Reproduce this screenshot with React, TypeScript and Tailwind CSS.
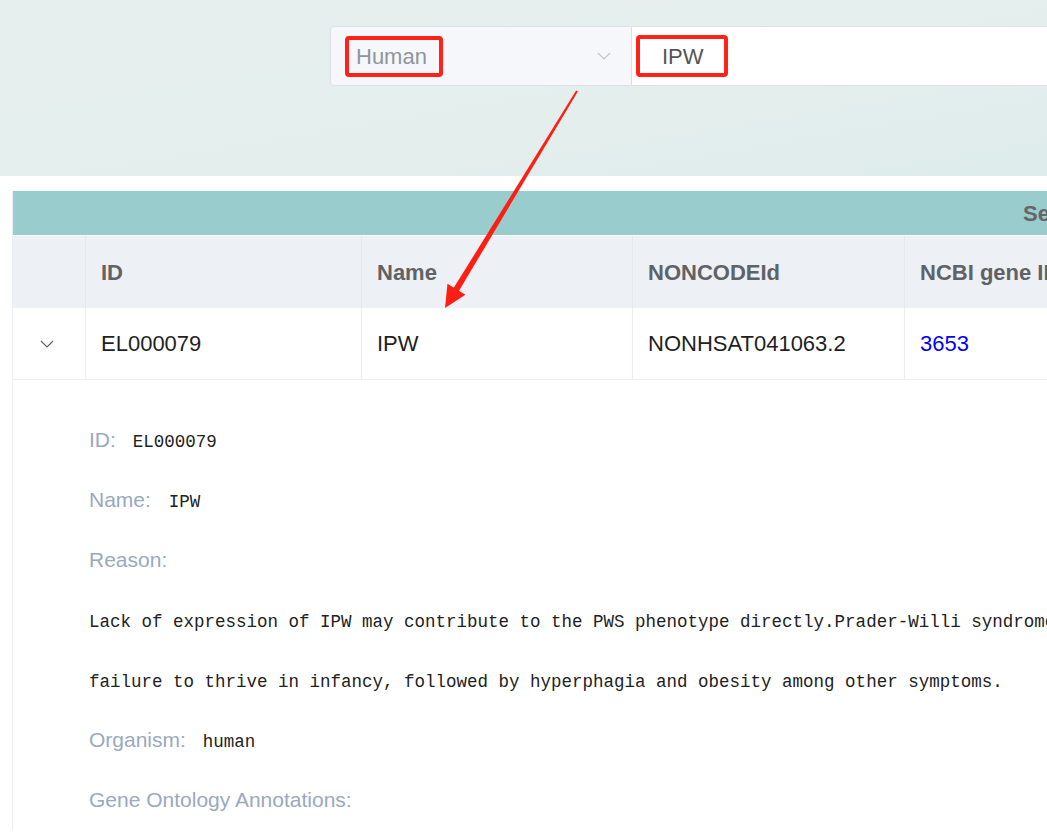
import React from "react";

function Chevron({ className, color }: { className?: string; color: string }) {
  return (
    <svg className={className} width="14" height="8" viewBox="0 0 14 8" fill="none">
      <path d="M1 1 L7 7 L13 1" stroke={color} strokeWidth="1.2" />
    </svg>
  );
}

function Arrow() {
  const sx = 577, sy = 91, tx = 445, ty = 308;
  const dx = tx - sx, dy = ty - sy;
  const len = Math.sqrt(dx * dx + dy * dy);
  const ux = dx / len, uy = dy / len;
  const px = -uy, py = ux;
  const headL = 22, headW = 10.5;
  const bx = tx - ux * headL, by = ty - uy * headL;
  const w0 = 1, w1 = 3;
  const shaft = [
    [sx + px * w0, sy + py * w0],
    [bx + px * w1 + ux * 2, by + py * w1 + uy * 2],
    [bx - px * w1 + ux * 2, by - py * w1 + uy * 2],
    [sx - px * w0, sy - py * w0],
  ];
  const head = [
    [tx, ty],
    [bx + px * headW, by + py * headW],
    [bx - px * headW, by - py * headW],
  ];
  const pts = (a: number[][]) => a.map((p) => p.join(",")).join(" ");
  return (
    <svg className="absolute left-0 top-0 pointer-events-none" width="1047" height="837">
      <polygon points={pts(shaft)} fill="#ff1e12" />
      <polygon points={pts(head)} fill="#ff1e12" />
    </svg>
  );
}

export default function App() {
  const label = "text-[#99a9bf] text-[21px] font-['Liberation_Sans',sans-serif]";
  const mono = "font-['Liberation_Mono',monospace] text-[17.5px] text-[#222] pt-[4px]";
  return (
    <div className="relative w-[1047px] h-[837px] overflow-hidden bg-white font-['Liberation_Sans',Arial,sans-serif]">
      {/* top band */}
      <div className="h-[176px] bg-gradient-to-br from-[#e6efed] via-[#e5efed] to-[#deeceb] pt-[26px] pl-[330px]">
        <div className="flex h-[60px] w-[900px]">
          <div className="relative w-[302px] h-full bg-[#f5f7fa] border border-[#dcdfe6] rounded-l-[4px] flex items-center pl-[25px] pr-[20px]">
            <span className="text-[22px] text-[#90949b]">Human</span>
            <Chevron className="ml-auto" color="#c0c4cc" />
            <div className="absolute left-[14px] top-[9px] w-[98px] h-[41px] border-[4px] border-[#ff2218] rounded-[4px]" />
          </div>
          <div className="relative flex-1 h-full bg-white border-y border-[#dcdfe6] flex items-center pl-[30px]">
            <span className="text-[22px] text-[#555]">IPW</span>
            <div className="absolute left-[4px] top-[8px] w-[92px] h-[42px] border-[4px] border-[#ff2218] rounded-[4px]" />
          </div>
        </div>
      </div>

      {/* table */}
      <div className="mt-[15px] ml-[12px] border-l border-[#ebeef5] w-[1400px]">
        <div className="h-[45px] bg-[#99cccc] flex items-center pl-[1010px] border-b border-white">
          <span className="text-[22px] font-bold text-[#666] whitespace-nowrap">Search Results</span>
        </div>
        <div className="flex h-[72px] bg-[#edf0f5] text-[22px] font-bold text-[#606266]">
          <div className="w-[73px] border-r border-[#e4e7ed]" />
          <div className="w-[276px] border-r border-[#e4e7ed] flex items-center pl-[15px]">ID</div>
          <div className="w-[271px] border-r border-[#e4e7ed] flex items-center pl-[15px]">Name</div>
          <div className="w-[272px] border-r border-[#e4e7ed] flex items-center pl-[15px]">NONCODEId</div>
          <div className="w-[300px] flex items-center pl-[15px] whitespace-nowrap">NCBI gene ID</div>
        </div>
        <div className="flex h-[72px] bg-white text-[22px] text-[#1f1f1f] border-b border-[#ebeef5]">
          <div className="w-[73px] border-r border-[#ebeef5] flex items-center pl-[27px]">
            <Chevron color="#606266" />
          </div>
          <div className="w-[276px] border-r border-[#ebeef5] flex items-center pl-[15px]">EL000079</div>
          <div className="w-[271px] border-r border-[#ebeef5] flex items-center pl-[15px]">IPW</div>
          <div className="w-[272px] border-r border-[#ebeef5] flex items-center pl-[15px]">NONHSAT041063.2</div>
          <div className="w-[300px] flex items-center pl-[15px] text-[#0000ff]">3653</div>
        </div>
        <div className="pl-[76px] pt-[30px] whitespace-nowrap">
          <div className="h-[60px] flex items-center">
            <span className={label}>ID:</span>
            <span className={mono + " ml-[17px]"}>EL000079</span>
          </div>
          <div className="h-[60px] flex items-center">
            <span className={label}>Name:</span>
            <span className={mono + " ml-[18px]"}>IPW</span>
          </div>
          <div className="h-[60px] flex items-center">
            <span className={label}>Reason:</span>
          </div>
          <div className="h-[60px] flex items-center">
            <span className={mono}>Lack of expression of IPW may contribute to the PWS phenotype directly.Prader-Willi syndrome (PWS) is characterized by</span>
          </div>
          <div className="h-[60px] flex items-center">
            <span className={mono}>failure to thrive in infancy, followed by hyperphagia and obesity among other symptoms.</span>
          </div>
          <div className="h-[60px] flex items-center">
            <span className={label}>Organism:</span>
            <span className={mono + " ml-[17px]"}>human</span>
          </div>
          <div className="h-[60px] flex items-center">
            <span className={label}>Gene Ontology Annotations:</span>
          </div>
        </div>
      </div>

      <Arrow />
    </div>
  );
}
